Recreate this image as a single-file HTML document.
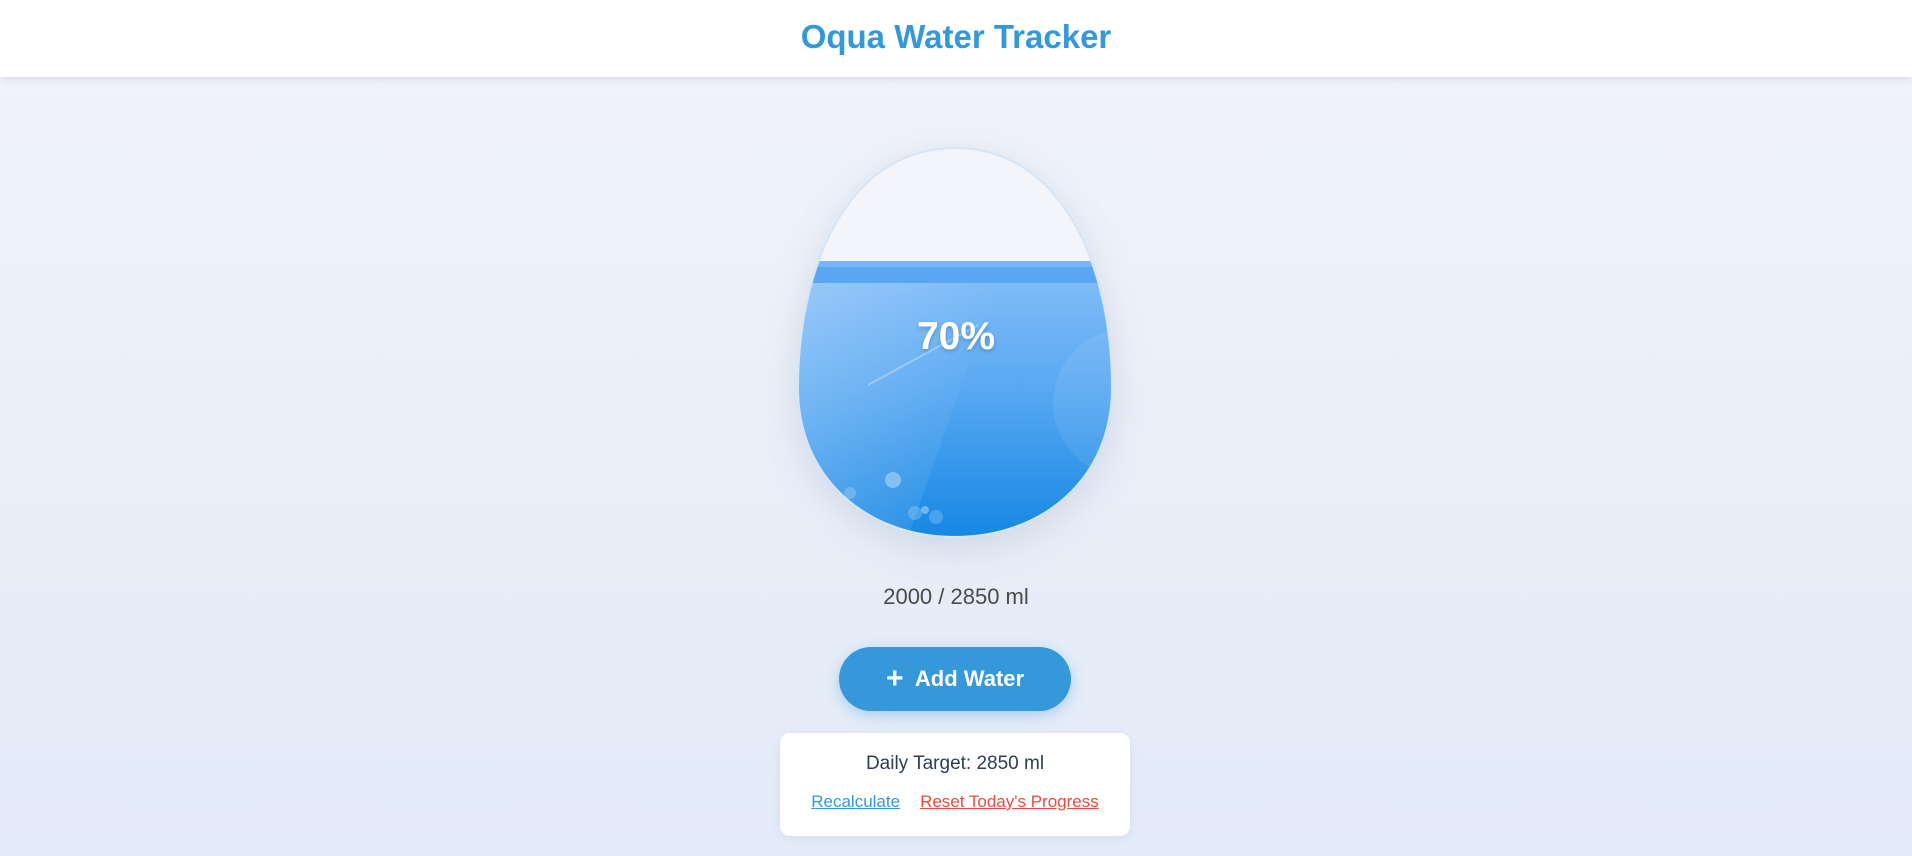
<!DOCTYPE html>
<html><head><meta charset="utf-8"><style>
*{margin:0;padding:0;box-sizing:border-box}
body{width:1912px;height:856px;overflow:hidden;font-family:"Liberation Sans",sans-serif;background:linear-gradient(#f1f4f9,#e3eaf8);position:relative}
.hdr{position:absolute;left:0;top:0;width:1912px;height:77px;background:#fff;box-shadow:0 2px 8px rgba(0,0,0,.1);text-align:center;line-height:74px;font-size:33px;font-weight:bold;color:#3498db}
.egg{position:absolute;left:796px;top:146px;filter:drop-shadow(0 10px 18px rgba(40,60,100,.13))}
.pct{position:absolute;left:0;width:1912px;top:315px;text-align:center;color:#fff;font-size:39px;font-weight:bold;text-shadow:0 2px 4px rgba(0,0,0,.2)}
.amt{position:absolute;left:0;width:1912px;top:584px;text-align:center;font-size:22px;color:#4a4a4a}
.btn{position:absolute;left:839px;top:647px;width:232px;height:64px;border-radius:32px;background:#3498db;color:#fff;font-weight:bold;font-size:22px;text-align:center;line-height:64px;box-shadow:0 4px 14px rgba(52,152,219,.35)}
.card{position:absolute;left:780px;top:733px;width:350px;height:103px;background:#fff;border-radius:10px;box-shadow:0 2px 10px rgba(0,0,0,.06);text-align:center}
.t{margin-top:20px;font-size:19px;color:#2c3e50}
.l{margin-top:17px;font-size:17px}
.l span{text-decoration:underline;margin:0 10px}
</style></head><body>
<div class="hdr">Oqua Water Tracker</div>
<svg class="egg" width="318" height="393" viewBox="-2 -2 318 393">
<defs>
<clipPath id="c"><path d="M157,0 C265,0 314,120 314,240 C314,330 245,389 157,389 C69,389 0,330 0,240 C0,120 49,0 157,0 Z"/></clipPath>
<linearGradient id="w" x1="0" y1="0" x2="0" y2="1"><stop offset="0" stop-color="#86bff9"/><stop offset=".45" stop-color="#5aa9f2"/><stop offset="1" stop-color="#1688e4"/></linearGradient>
<linearGradient id="s" x1="0" y1="0" x2="1" y2="0"><stop offset="0" stop-color="#fff" stop-opacity=".2"/><stop offset="1" stop-color="#fff" stop-opacity="0"/></linearGradient>
</defs>
<g clip-path="url(#c)">
<rect x="0" y="0" width="314" height="389" fill="#f3f5fa"/>
<rect x="0" y="113" width="314" height="276" fill="url(#w)"/>
<rect x="0" y="113" width="314" height="6" fill="#78b6f7"/>
<rect x="0" y="119" width="314" height="16" fill="#5aa6f3"/>
<path d="M0,135 L200,135 L110,389 L0,389 Z" fill="url(#s)"/>
<circle cx="330" cy="255" r="75" fill="#fff" opacity=".08"/>
<line x1="70" y1="237" x2="180" y2="177" stroke="#fff" stroke-opacity=".3" stroke-width="2"/>
<circle cx="95" cy="332" r="8" fill="#fff" opacity=".35"/>
<circle cx="52" cy="345" r="6" fill="#fff" opacity=".2"/>
<circle cx="117" cy="365" r="7" fill="#fff" opacity=".2"/>
<circle cx="127" cy="362" r="4" fill="#fff" opacity=".35"/>
<circle cx="138" cy="369" r="7" fill="#fff" opacity=".2"/>
</g>
<path d="M157,0 C265,0 314,120 314,240 C314,330 245,389 157,389 C69,389 0,330 0,240 C0,120 49,0 157,0 Z" fill="none" stroke="#d5e6f8" stroke-width="2"/>
</svg>
<div class="pct">70%</div>
<div class="amt">2000 / 2850 ml</div>
<div class="btn"><span style="font-size:30px;vertical-align:-2px">+</span>&nbsp; Add Water</div>
<div class="card"><div class="t">Daily Target: 2850 ml</div><div class="l"><span style="color:#3498db">Recalculate</span><span style="color:#e74c3c">Reset Today's Progress</span></div></div>
</body></html>
